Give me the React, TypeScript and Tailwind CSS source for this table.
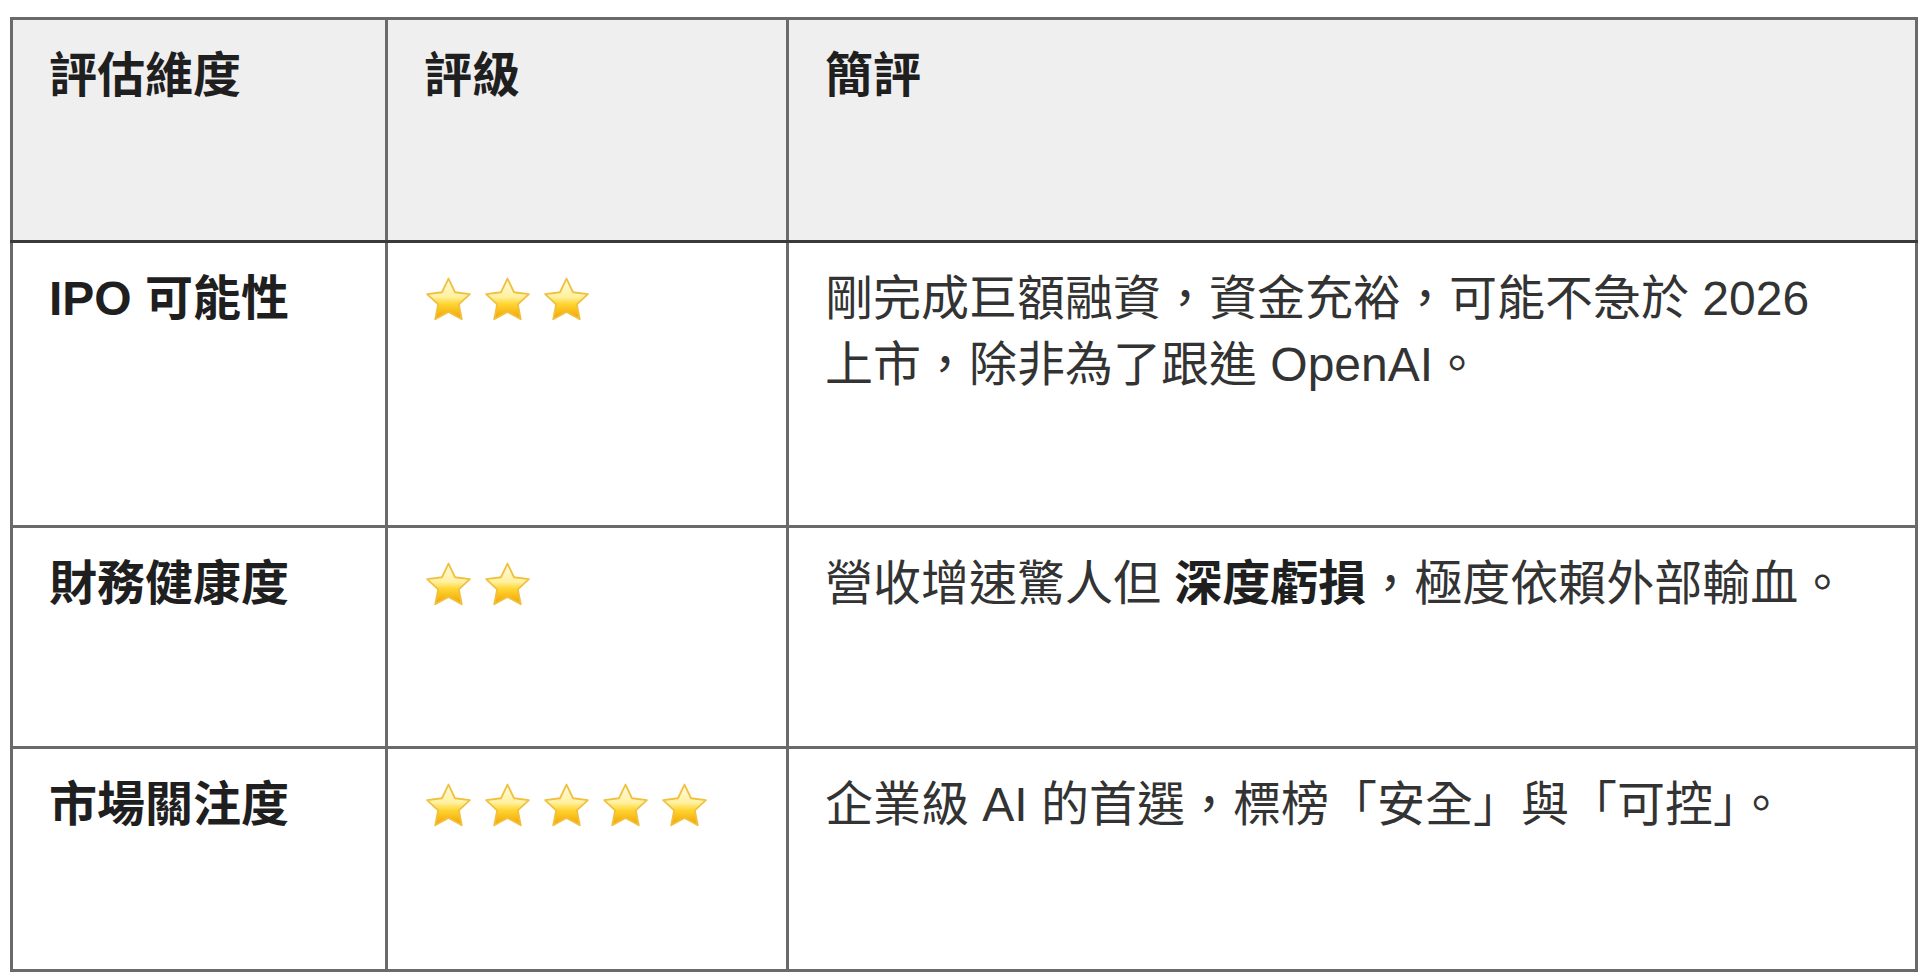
import { useId } from "react";

const FONT = "font-['Liberation_Sans','Noto_Sans_CJK_TC',sans-serif]";

type Row = {
  label: string;
  stars: number;
  comment: React.ReactNode;
  height: string;
};

const rows: Row[] = [
  {
    label: "IPO 可能性",
    stars: 3,
    comment: (
      <>
        剛完成巨額融資，資金充裕，可能不急於 2026
        <br />
        上市，除非為了跟進 OpenAI。
      </>
    ),
    height: "h-[285px]",
  },
  {
    label: "財務健康度",
    stars: 2,
    comment: (
      <>
        營收增速驚人但 <strong className="font-bold text-[#1f1f1f]">深度虧損</strong>，極度依賴外部輸血。
      </>
    ),
    height: "h-[221px]",
  },
  {
    label: "市場關注度",
    stars: 5,
    comment: <>企業級 AI 的首選，標榜「安全」與「可控」。</>,
    height: "h-[223px]",
  },
];

function Star() {
  const id = useId();
  return (
    <svg width="45" height="44" viewBox="2 1.6 20 19.4" className="shrink-0">
      <defs>
        <linearGradient id={id} x1="0" y1="0" x2="0" y2="1">
          <stop offset="0%" stopColor="#fffbe0" />
          <stop offset="45%" stopColor="#fff1a0" />
          <stop offset="62%" stopColor="#ffd633" />
          <stop offset="100%" stopColor="#f2a100" />
        </linearGradient>
      </defs>
      <path
        d="M12 2.2l2.9 6.1 6.6.8-4.9 4.6 1.3 6.6L12 17.1l-5.9 3.2 1.3-6.6-4.9-4.6 6.6-.8z"
        fill={`url(#${id})`}
        stroke="#f0c040"
        strokeWidth="0.8"
        strokeLinejoin="round"
      />
    </svg>
  );
}

function Stars({ count }: { count: number }) {
  return (
    <div className="flex h-[66px] items-center gap-[14px]">
      {Array.from({ length: count }).map((_, i) => (
        <Star key={i} />
      ))}
    </div>
  );
}

export default function App() {
  return (
    <div className={`min-h-screen bg-white ${FONT}`}>
      <table className="ml-[10px] mt-[17px] w-[1908px] table-fixed border-collapse border-[3px] border-[#5a5a5a] text-[48px] leading-[66px]">
        <colgroup>
          <col className="w-[375px]" />
          <col className="w-[401px]" />
          <col />
        </colgroup>
        <thead>
          <tr className="h-[223px] bg-[#efefef]">
            {["評估維度", "評級", "簡評"].map((h) => (
              <th
                key={h}
                className="border-[3px] border-[#6a6a6a] border-b-[#3a3a3a] px-[36px] pt-[23px] text-left align-top font-bold text-[#1f1f1f]"
              >
                {h}
              </th>
            ))}
          </tr>
        </thead>
        <tbody>
          {rows.map((row) => (
            <tr key={row.label} className={row.height}>
              <td className="border-[3px] border-[#6a6a6a] px-[36px] pt-[23px] align-top font-bold text-[#1f1f1f]">
                {row.label}
              </td>
              <td className="border-[3px] border-[#6a6a6a] px-[38px] pt-[23px] align-top">
                <Stars count={row.stars} />
              </td>
              <td className="border-[3px] border-[#6a6a6a] px-[36px] pt-[23px] align-top text-[#333333]">
                {row.comment}
              </td>
            </tr>
          ))}
        </tbody>
      </table>
    </div>
  );
}
